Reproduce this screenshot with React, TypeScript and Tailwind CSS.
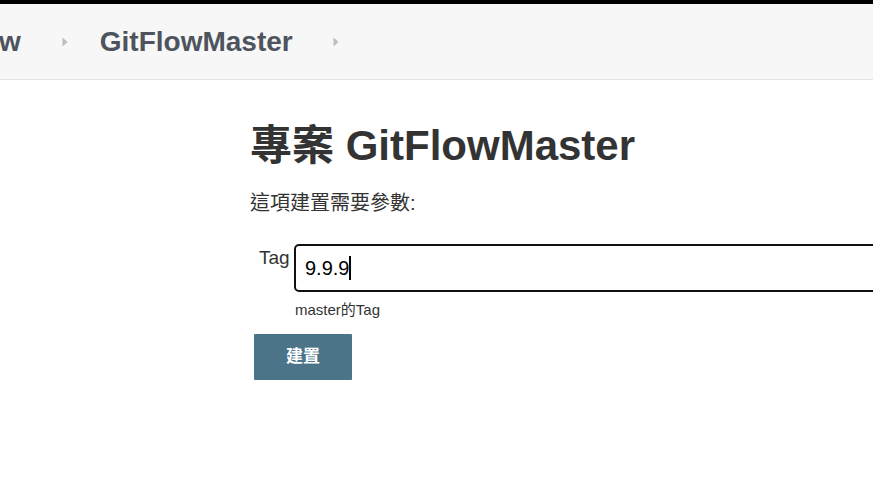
import React from "react";

function Chevron() {
  return (
    <svg width="6" height="10" viewBox="0 0 6 10" className="shrink-0">
      <path d="M0.5 0.5 L5.5 5 L0.5 9.5 Z" fill="#bdbdbd" />
    </svg>
  );
}

export default function App() {
  const sans = { fontFamily: '"Liberation Sans", Arial, "Noto Sans CJK TC", sans-serif' };
  return (
    <div className="w-[873px] h-[490px] overflow-hidden bg-white" style={sans}>
      <div className="h-[4px] bg-black" />
      <div className="h-[76px] bg-[#f7f7f7] border-b border-[#e3e3e3] flex items-center overflow-hidden">
        <div className="flex items-center text-[28px] font-bold text-[#4d545d] whitespace-nowrap">
          <span className="ml-[-1px]">w</span>
          <span className="ml-[41px] mr-[32px] flex"><Chevron /></span>
          <span>GitFlowMaster</span>
          <span className="ml-[40px] flex"><Chevron /></span>
        </div>
      </div>
      <div className="pl-[250px] pt-[42px]">
        <h1 className="text-[42px] leading-[48px] font-bold text-[#333333]">專案 GitFlowMaster</h1>
        <p className="mt-[21px] text-[20px] leading-[24px] text-[#333333]">這項建置需要參數:</p>
        <div className="mt-[29px] flex items-start">
          <label className="shrink-0 ml-[9px] mt-[3px] text-[19px] leading-[22px] text-[#333333] w-[35px]">Tag</label>
          <div className="shrink-0 flex flex-col">
            <div className="w-[600px] h-[48px] border-[2px] border-[#111] rounded-[5px] flex items-center pl-[9px] text-[20px] text-black">
              <span>9.9.9</span>
              <span className="w-[2px] h-[24px] bg-black" />
            </div>
            <div className="mt-[9px] ml-[1px] text-[15px] leading-[18px] text-[#333333]">master的Tag</div>
          </div>
        </div>
        <button className="mt-[15px] ml-[4px] w-[98px] h-[46px] bg-[#4b7489] text-white text-[17px] font-bold rounded-[1px]">
          建置
        </button>
      </div>
    </div>
  );
}
